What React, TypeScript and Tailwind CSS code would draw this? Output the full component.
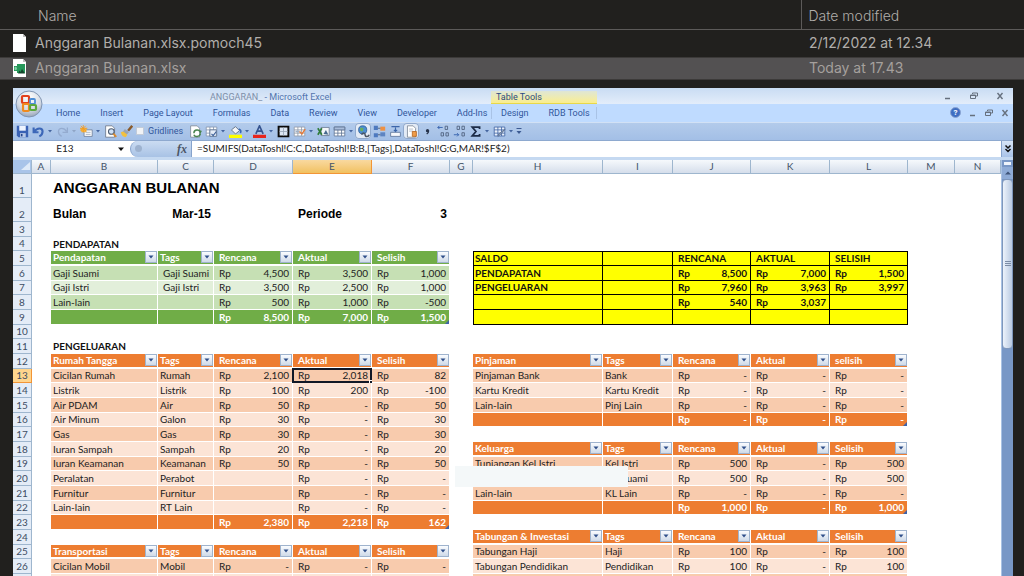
import type { ReactNode } from "react";

type Kind = "head" | "odd" | "even" | "total" | "saldo" | "label" | "title" | "period";
type Line = { kind: Kind; tone?: "green" | "orange"; indent?: boolean; cells: string[] };

const files = [
  { name: "Anggaran Bulanan.xlsx.pomoch45", date: "2/12/2022 at 12.34", excel: false },
  { name: "Anggaran Bulanan.xlsx", date: "Today at 17.43", excel: true },
];

const ribbonTabs = ["Home", "Insert", "Page Layout", "Formulas", "Data", "Review", "View", "Developer", "Add-Ins"];
const columns = ["A", "B", "C", "D", "E", "F", "G", "H", "I", "J", "K", "L", "M", "N"];

const leftLines: Record<number, Line> = {
  1: { kind: "title", cells: ["ANGGARAN BULANAN", "", "", "", ""] },
  2: { kind: "period", cells: ["Bulan", "Mar-15", "", "Periode", "3"] },
  4: { kind: "label", cells: ["PENDAPATAN", "", "", "", ""] },
  5: { kind: "head", tone: "green", cells: ["Pendapatan", "Tags", "Rencana", "Aktual", "Selisih"] },
  6: { kind: "odd", tone: "green", indent: true, cells: ["Gaji Suami", "Gaji Suami", "4,500", "3,500", "1,000"] },
  7: { kind: "even", tone: "green", indent: true, cells: ["Gaji Istri", "Gaji Istri", "3,500", "2,500", "1,000"] },
  8: { kind: "odd", tone: "green", cells: ["Lain-lain", "", "500", "1,000", "-500"] },
  9: { kind: "total", tone: "green", cells: ["", "", "8,500", "7,000", "1,500"] },
  11: { kind: "label", cells: ["PENGELUARAN", "", "", "", ""] },
  12: { kind: "head", tone: "orange", cells: ["Rumah Tangga", "Tags", "Rencana", "Aktual", "Selisih"] },
  13: { kind: "odd", tone: "orange", cells: ["Cicilan Rumah", "Rumah", "2,100", "2,018", "82"] },
  14: { kind: "even", tone: "orange", cells: ["Listrik", "Listrik", "100", "200", "-100"] },
  15: { kind: "odd", tone: "orange", cells: ["Air PDAM", "Air", "50", "-", "50"] },
  16: { kind: "even", tone: "orange", cells: ["Air Minum", "Galon", "30", "-", "30"] },
  17: { kind: "odd", tone: "orange", cells: ["Gas", "Gas", "30", "-", "30"] },
  18: { kind: "even", tone: "orange", cells: ["Iuran Sampah", "Sampah", "20", "-", "20"] },
  19: { kind: "odd", tone: "orange", cells: ["Iuran Keamanan", "Keamanan", "50", "-", "50"] },
  20: { kind: "even", tone: "orange", cells: ["Peralatan", "Perabot", "", "-", "-"] },
  21: { kind: "odd", tone: "orange", cells: ["Furnitur", "Furnitur", "", "-", "-"] },
  22: { kind: "even", tone: "orange", cells: ["Lain-lain", "RT Lain", "", "-", "-"] },
  23: { kind: "total", tone: "orange", cells: ["", "", "2,380", "2,218", "162"] },
  25: { kind: "head", tone: "orange", cells: ["Transportasi", "Tags", "Rencana", "Aktual", "Selisih"] },
  26: { kind: "odd", tone: "orange", cells: ["Cicilan Mobil", "Mobil", "-", "-", "-"] },
  27: { kind: "even", tone: "orange", cells: ["", "", "", "", ""] },
};

const rightLines: Record<number, Line> = {
  5: { kind: "saldo", cells: ["SALDO", "", "RENCANA", "AKTUAL", "SELISIH"] },
  6: { kind: "saldo", cells: ["PENDAPATAN", "", "8,500", "7,000", "1,500"] },
  7: { kind: "saldo", cells: ["PENGELUARAN", "", "7,960", "3,963", "3,997"] },
  8: { kind: "saldo", cells: ["", "", "540", "3,037", ""] },
  9: { kind: "saldo", cells: ["", "", "", "", ""] },
  12: { kind: "head", tone: "orange", cells: ["Pinjaman", "Tags", "Rencana", "Aktual", "selisih"] },
  13: { kind: "odd", tone: "orange", cells: ["Pinjaman Bank", "Bank", "-", "-", "-"] },
  14: { kind: "even", tone: "orange", cells: ["Kartu Kredit", "Kartu Kredit", "-", "-", "-"] },
  15: { kind: "odd", tone: "orange", cells: ["Lain-lain", "Pinj Lain", "-", "-", "-"] },
  16: { kind: "total", tone: "orange", cells: ["", "", "-", "-", "-"] },
  18: { kind: "head", tone: "orange", cells: ["Keluarga", "Tags", "Rencana", "Aktual", "Selisih"] },
  19: { kind: "odd", tone: "orange", cells: ["Tunjangan Kel Istri", "Kel Istri", "500", "-", "500"] },
  20: { kind: "even", tone: "orange", cells: ["", "Kel Suami", "500", "-", "500"] },
  21: { kind: "odd", tone: "orange", cells: ["Lain-lain", "KL Lain", "-", "-", "-"] },
  22: { kind: "total", tone: "orange", cells: ["", "", "1,000", "-", "1,000"] },
  24: { kind: "head", tone: "orange", cells: ["Tabungan & Investasi", "Tags", "Rencana", "Aktual", "Selisih"] },
  25: { kind: "odd", tone: "orange", cells: ["Tabungan Haji", "Haji", "100", "-", "100"] },
  26: { kind: "even", tone: "orange", cells: ["Tabungan Pendidikan", "Pendidikan", "100", "-", "100"] },
  27: { kind: "odd", tone: "orange", cells: ["", "", "", "", ""] },
};

const fills = {
  green: { head: "bg-[#70ad47]", odd: "bg-[#c6e0b4]", even: "bg-[#e2efda]", total: "bg-[#70ad47]" },
  orange: { head: "bg-[#ed7d31]", odd: "bg-[#f8cbad]", even: "bg-[#fce4d6]", total: "bg-[#ed7d31]" },
};

function FileIcon({ excel }: { excel: boolean }) {
  return (
    <svg className="h-[18px] w-[13px] shrink-0" viewBox="0 0 13 18">
      <path d="M0 0h10l3 3v15H0z" fill="#fff" />
      <path d="M10 0v3h3z" fill="#bdbdbd" />
      {excel && (
        <>
          <path d="M4 5h8v9H4v-2H1V7h3z" fill="#26985a" />
          <path d="M1.500 8.500c0-1 2.500-1 2.500 1s-2 2-2.500 1z" fill="#7fd0a3" />
          <path d="M5 14.500l1.500-3 1 1.500 1.500-3 3 4.500z" fill="#12472c" />
        </>
      )}
    </svg>
  );
}

function FileList() {
  return (
    <table className="w-full table-fixed border-collapse text-left font-['Inter',sans-serif] text-sm leading-5 text-[#b1aeab]">
      <colgroup>
        <col />
        <col className="w-[223px]" />
      </colgroup>
      <thead>
        <tr className="h-[29px] border-b border-[#5c5a59]">
          <th className="pt-1 pl-[38px] font-light">Name</th>
          <th className="border-l border-[#5c5a59] pt-1 pl-[7px] font-light">Date modified</th>
        </tr>
      </thead>
      <tbody>
        {files.map((file) => (
          <tr key={file.name} className={file.excel ? "h-[22px] border-y border-[#3c3a39] bg-[#535152] text-[#a5a09d]" : "h-7"}>
            <td className="p-0 pl-[13px]">
              <div className="flex items-center gap-[9px]">
                <FileIcon excel={file.excel} />
                {file.name}
              </div>
            </td>
            <td className="p-0 pl-2">{file.date}</td>
          </tr>
        ))}
      </tbody>
    </table>
  );
}

function OfficeOrb() {
  return (
    <svg className="h-7 w-7" viewBox="0 0 28 28">
      <defs>
        <radialGradient id="orb" cx="50%" cy="25%" r="80%">
          <stop offset="0" stopColor="#ffffff" />
          <stop offset="0.6" stopColor="#d3dae4" />
          <stop offset="1" stopColor="#8d9bb0" />
        </radialGradient>
      </defs>
      <circle cx="14" cy="14" r="13" fill="url(#orb)" stroke="#8195b2" />
      <g fill="none" strokeWidth="2.2" strokeLinejoin="round">
        <rect x="7" y="6" width="7" height="7" rx="1" stroke="#e2401c" />
        <rect x="15" y="9" width="5" height="5" rx="1" stroke="#4f8fd6" strokeWidth="1.8" />
        <rect x="8" y="14" width="6" height="7" rx="1" stroke="#f08a1d" />
        <rect x="15" y="15" width="6" height="5" rx="1" stroke="#5aa83b" />
      </g>
    </svg>
  );
}

function WindowButtons({ gap }: { gap: string }) {
  return (
    <div className={`flex items-center text-[#66707e] ${gap}`}>
      <button aria-label="Minimize">
        <svg className="h-2 w-2" viewBox="0 0 8 8"><path d="M1 6.5h5" stroke="currentColor" strokeWidth="1.5" /></svg>
      </button>
      <button aria-label="Restore">
        <svg className="h-2 w-2" viewBox="0 0 8 8" fill="none" stroke="currentColor"><path d="M2.5 2V1h5v3H6M.5 3h5v3.5h-5zM.5 3.500h5" /></svg>
      </button>
      <button aria-label="Close">
        <svg className="h-2 w-2" viewBox="0 0 8 8"><path d="M1.500 1l5 6m0-6l-5 6" stroke="currentColor" strokeWidth="1.4" /></svg>
      </button>
    </div>
  );
}

function Tool({ label, pressed, children }: { label: string; pressed?: boolean; children: ReactNode }) {
  return (
    <button
      aria-label={label}
      className={`flex h-4 w-4 shrink-0 items-center justify-center ${pressed ? "rounded-sm bg-[#e3ebf6] ring-1 ring-[#90a9cd] ring-inset" : ""}`}
    >
      <svg className="h-[13px] w-[13px]" viewBox="0 0 16 16" fill="none">
        {children}
      </svg>
    </button>
  );
}

function Caret({ dim }: { dim?: boolean }) {
  return (
    <svg className="h-2 w-2 shrink-0" viewBox="0 0 8 8">
      <path d="M2 3h4L4 5.500z" fill={dim ? "#8fa5c6" : "#4566a0"} />
    </svg>
  );
}

const gridPath = "M1.500 2.500h13v11h-13zM1.500 6h13M1.500 10h13M6 2.500v11M10.500 2.500v11";

function Toolbar() {
  return (
    <div className="flex h-[19px] items-center border-t border-[#d2e1f5] border-b border-b-[#8ea9cf] bg-linear-to-b from-[#b3cbeb] to-[#a3bfe6] pl-px">
      <Tool label="Save">
        <path d="M1 1h14v14H3l-2-2z" fill="#3a62b4" />
        <path d="M4 1h8v6H4z" fill="#eef4ff" />
        <path d="M5 10h7v5H5z" fill="#b9c9e6" />
        <path d="M6 11h2v3H6z" fill="#24458c" />
      </Tool>
      <Tool label="Undo">
        <path d="M2 3v6h6M3 8c3-5 10-5 10 0 0 3-2 5-4 6" stroke="#3c67b8" strokeWidth="2.600" />
      </Tool>
      <Caret />
      <Tool label="Redo">
        <path d="M14 3v6H8M13 8C10 3 3 3 3 8c0 3 2 5 4 6" stroke="#94abcf" strokeWidth="1.600" />
      </Tool>
      <Caret dim />
      <Tool label="New note">
        <path d="M5 6h10v8H5z" fill="#fdfdfd" stroke="#6b7c97" />
        <path d="M0 4h8v5H2z" fill="#f4b13c" />
        <path d="M4 0v9M0 4h9M1 1l6 6M7 1L1 7" stroke="#f39a1e" />
        <path d="M7 9h6M7 11.500h6" stroke="#9aa7bb" />
      </Tool>
      <Caret />
      <Tool label="Print preview">
        <path d="M2 1h8l3 3v11H2z" fill="#fff" stroke="#6a7587" />
        <circle cx="9" cy="8" r="3.500" fill="#cfe1f6" stroke="#4d5b70" strokeWidth="1.300" />
        <path d="M11.500 10.500l3.500 4" stroke="#d98a30" strokeWidth="2.400" />
      </Tool>
      <Tool label="Format painter">
        <path d="M15 1l-5 6" stroke="#8a5a2a" strokeWidth="3" />
        <path d="M6 5l5 4-3 3-5-3z" fill="#9aa4b3" />
        <path d="M1 9l3-1 5 4-2 3c-3 0-5-2-6-6z" fill="#f3c13e" />
      </Tool>
      <label className="flex w-[53px] shrink-0 items-center gap-1 pl-0.5">
        <input type="checkbox" className="h-2 w-2 shrink-0 appearance-none border border-[#c2cbd8] bg-[#f1f3f6]" />
        Gridlines
      </label>
      <Tool label="Refresh">
        <path d="M2 1h8l3 3v11H2z" fill="#fff" stroke="#7d8796" />
        <path d="M6 10c0-5 7-5 8-1l1-2m-1 4c-1 4-7 4-8 1" stroke="#4a8550" strokeWidth="1.800" />
      </Tool>
      <Tool label="Properties">
        <path d={gridPath} fill="#fff" stroke="#8193ac" />
        <path d="M6 6h8v8H6z" fill="#e7eef8" stroke="#5b7191" />
        <path d="M8 11l2 2 4-5" stroke="#3a5d96" strokeWidth="1.400" />
      </Tool>
      <Caret />
      <Tool label="Fill color">
        <path d="M3 6l5-4 5 5-5 4z" fill="#f3f5f8" stroke="#59677c" />
        <path d="M12 5c3 1 3 3 2 5" stroke="#3b6ab5" strokeWidth="2" />
        <path d="M0 12h16v4H0z" fill="#ffff00" />
      </Tool>
      <Caret />
      <Tool label="Font color">
        <path d="M3.500 11L8 1l4.500 10M5 7.500h6" stroke="#35538f" strokeWidth="2" />
        <path d="M0 12h16v4H0z" fill="#e8241c" />
      </Tool>
      <Caret />
      <Tool label="Borders">
        <path d="M2 2h12v12H2z" fill="#dce6f4" stroke="#0a0a0a" strokeWidth="2.400" />
        <path d="M8 3v10M3 8h10" stroke="#98a5b8" />
      </Tool>
      <Tool label="Conditional formatting">
        <path d={gridPath} fill="#fff" stroke="#8f98a6" />
        <path d="M3 7h5v2H3z" fill="#9fb0c6" />
        <path d="M8 8l3 3 4-6" stroke="#e57a3a" strokeWidth="1.800" />
      </Tool>
      <Caret />
      <Tool label="Export">
        <path d="M5 3h10v10H5z" fill="#f3f6fa" stroke="#6a7a92" />
        <path d="M1 4l5 8m0-8l-5 8" stroke="#2f7b38" strokeWidth="2" />
        <path d="M8 11l3-5 3 6z" fill="#47698f" />
      </Tool>
      <Tool label="Freeze panes">
        <path d={gridPath} fill="#fff" stroke="#5f7494" />
        <path d="M1.500 2.500h13V6h-13z" fill="#a9bddb" stroke="#5f7494" />
      </Tool>
      <Caret />
      <Tool label="Hyperlink" pressed>
        <circle cx="7" cy="6" r="5" fill="#4c8fd0" stroke="#2e5d96" />
        <path d="M4 3l4 1-1 4-3-1z" fill="#6bb05a" />
        <path d="M6 12c0-3 4-3 4 0s4 3 5 0" stroke="#4b5563" strokeWidth="1.800" />
      </Tool>
      <Tool label="Group">
        <path d="M1 1h5v5H1zM1 10h5v5H1z" fill="#4d79bf" />
        <path d="M9 2h6v5H9z" fill="#ee9042" />
        <path d="M9 9h6v5H9z" fill="#5d84c2" />
        <path d="M6 4h3M6 12h3" stroke="#49566a" />
      </Tool>
      <Tool label="Insert row">
        <path d="M2 9h12v5H2z" fill="#f5f8fc" stroke="#5a7298" />
        <path d="M3 2h10M8 3v4M6 6l2 2 2-2" stroke="#3c66aa" strokeWidth="1.400" />
      </Tool>
      <Tool label="Document" pressed>
        <path d="M3 1h7l3 3v11H3z" fill="#fff" stroke="#7b8695" />
        <path d="M5 5h5M5 7.500h5" stroke="#a7b1bf" />
        <path d="M9 8h5v6H9z" fill="#ee9c4a" stroke="#b8641b" />
      </Tool>
      <Tool label="Comma style">
        <circle cx="8" cy="7" r="2" fill="#26324a" />
        <path d="M9.500 7c0 2-1 3-2.500 4" stroke="#26324a" strokeWidth="1.500" />
      </Tool>
      <Tool label="Increase decimal">
        <path d="M7 3H1m2-2L1 3l2 2" stroke="#3b66b0" strokeWidth="1.200" />
        <path d="M10 1.500h3v4h-3zM5 9.500h3v4H5zM11 9.500h3v4h-3z" stroke="#4a5b78" />
      </Tool>
      <Tool label="Decrease decimal">
        <path d="M1 12h6m-2-2l2 2-2 2" stroke="#3b66b0" strokeWidth="1.200" />
        <path d="M5 1.500h3v4H5zM11 1.500h3v4h-3zM11 9.500h3v4h-3z" stroke="#4a5b78" />
      </Tool>
      <Tool label="Sum">
        <path d="M13 5V2.500H4L8.500 8 4 13.500h9V11" stroke="#1d2c48" strokeWidth="2.200" />
      </Tool>
      <Caret />
      <Tool label="Format as table">
        <path d={gridPath} fill="#e9f0fa" stroke="#3f63a3" />
        <path d="M15 5l-6 7-3 2 1-3z" fill="#8ba4c8" stroke="#5b6f8e" />
      </Tool>
      <Caret />
      <svg className="h-2 w-2 shrink-0" viewBox="0 0 8 8">
        <path d="M1.500 1.500h5" stroke="#3c5a92" />
        <path d="M1.500 4h5L4 7z" fill="#3c5a92" />
      </svg>
    </div>
  );
}

function Ribbon() {
  return (
    <header className="relative font-['Roboto',sans-serif] text-[9px] leading-3 text-[#31569b]">
      <div className="flex h-4 bg-linear-to-b from-[#c9dcf3] to-[#e3edfa]">
        <div className="w-[478px] shrink-0 pt-[3px] pl-[197px] text-[#5275ae]">
          <span className="text-[#7d8fa9]">ANGGARAN_</span> - Microsoft Excel
        </div>
        <div className="mt-[3px] w-[106px] shrink-0 border-b border-[#e8d84a] bg-linear-to-b from-[#dfe6d5] to-[#fbee8c] pl-[5px] text-[#2c4a82]">Table Tools</div>
        <div className="flex flex-1 justify-end pr-[9px]">
          <WindowButtons gap="gap-[18px]" />
        </div>
      </div>
      <nav className="flex h-[18px] items-center bg-[#bfdbff]">
        <div className="flex w-[478px] shrink-0 gap-5 pl-[43px] whitespace-nowrap">
          {ribbonTabs.map((tab) => (
            <button key={tab}>{tab}</button>
          ))}
        </div>
        <div className="flex w-[106px] shrink-0 gap-5 border-x border-[#a9c3e6] pl-[9px] whitespace-nowrap">
          <button>Design</button>
          <button>RDB Tools</button>
        </div>
        <div className="flex flex-1 items-center justify-end gap-2 pr-1">
          <button aria-label="Help" className="flex h-[11px] w-[11px] items-center justify-center rounded-full border border-[#8ba5d2] bg-[#3f6ec2] text-[8px] font-bold text-white">?</button>
          <WindowButtons gap="gap-2" />
        </div>
      </nav>
      <Toolbar />
      <button aria-label="Office menu" className="absolute top-[2px] left-[2px]">
        <OfficeOrb />
      </button>
    </header>
  );
}

function FormulaBar() {
  return (
    <div className="flex h-[19px] border-b-[3px] border-[#c5d9f1] bg-white font-['Lato',sans-serif] text-[#222]">
      <div className="flex w-[117px] shrink-0 items-center">
        <input aria-label="Name box" defaultValue="E13" className="w-[104px] bg-transparent text-center text-[10px] outline-none" />
        <svg className="h-2 w-2" viewBox="0 0 8 8"><path d="M1 2.500h6L4 6z" fill="#111" /></svg>
      </div>
      <div className="flex w-[62px] shrink-0 items-center justify-between rounded-l-full border-r border-l border-[#86a3cc] bg-linear-to-b from-[#cbdcf2] to-[#a8c2e5] pr-1 pl-1">
        <span className="h-[7px] w-[7px] rounded-full bg-[#9db2cf]" />
        <button aria-label="Insert function" className="font-['Liberation_Serif',serif] text-xs leading-3 font-bold text-[#4b5565] italic">fx</button>
      </div>
      <input
        aria-label="Formula"
        defaultValue="=SUMIFS(DataToshl!C:C,DataToshl!B:B,[Tags],DataToshl!G:G,MAR!$F$2)"
        className="min-w-0 flex-1 pl-[5px] text-[10px] outline-none"
      />
      <button aria-label="Expand formula bar" className="flex w-3 items-center justify-center border-l border-[#86a3cc] bg-linear-to-b from-[#d7e5f7] to-[#a9c3e8]">
        <svg className="h-2 w-2" viewBox="0 0 8 8"><path d="M1.500 0.500L4 3l2.500-2.500M1.500 4L4 6.500 6.500 4" fill="none" stroke="#111" strokeWidth="1.500" /></svg>
      </button>
    </div>
  );
}

function FilterButton({ label }: { label: string }) {
  return (
    <button aria-label={`Filter ${label}`} className="flex h-3 w-3 shrink-0 items-center justify-center border border-[#9fb3cd] bg-linear-to-b from-[#fafcff] to-[#cfdae8]">
      <svg className="h-2 w-2" viewBox="0 0 8 8"><path d="M1.500 2.500h5L4 5.500z" fill="#2f4f8a" /></svg>
    </button>
  );
}

function Amount({ value }: { value: string }) {
  return (
    <div className="flex justify-between">
      <span>Rp</span>
      <span>{value}</span>
    </div>
  );
}

function isAmount(value: string) {
  return /^-?[\d,]*$/.test(value) && value !== "";
}

function Cells({ line, active, first }: { line?: Line; active?: boolean; first?: boolean }) {
  if (!line) return <td colSpan={5} className="p-0" />;
  const { kind, tone, cells } = line;

  if (kind === "title") {
    return <td colSpan={5} className="p-0 pl-[2px] pb-[2px] align-bottom font-['Liberation_Sans',sans-serif] text-[15px] leading-4 font-bold text-black">{cells[0]}</td>;
  }
  if (kind === "label") {
    return <td colSpan={5} className="p-0 pl-[2px] font-bold text-[#111]">{cells[0]}</td>;
  }
  if (kind === "period") {
    return cells.map((cell, i) => (
      <td
        key={i}
        className={`p-0 pb-px align-bottom font-['Liberation_Sans',sans-serif] text-xs leading-[14px] font-bold text-black ${i === 3 ? "pl-[5px]" : i === 0 ? "pl-[2px]" : "pr-[3px] text-right"}`}
      >
        {cell}
      </td>
    ));
  }
  if (kind === "saldo") {
    return cells.map((cell, i) => (
      <td
        key={i}
        className={`border-r border-b border-black bg-[#ffff00] p-0 font-bold text-[#111] ${first ? "border-t" : ""} ${i === 0 ? "border-l" : ""} ${i < 2 ? "pl-px" : "pr-[3px] pl-[5px]"}`}
      >
        {isAmount(cell) ? <Amount value={cell} /> : cell}
      </td>
    ));
  }

  const strong = kind === "head" || kind === "total";
  return cells.map((cell, i) => {
    const pad = i > 1 || (line.indent && i === 1) ? "pl-[5px]" : "pl-[2px]";
    const edge = kind === "head" ? "border-b-2" : "border-b";
    const base = `relative border-r border-white p-0 ${edge} ${pad} ${fills[tone ?? "orange"][kind]} ${strong ? "font-bold text-white" : "text-[#222]"}`;
    if (kind === "head") {
      return (
        <th key={i} className={`${base} text-left`}>
          <div className="flex items-center justify-between">
            {cell}
            <FilterButton label={cell} />
          </div>
        </th>
      );
    }
    return (
      <td key={i} className={`${base} ${i > 1 ? "pr-[3px]" : ""}`}>
        {i > 1 && cell ? <Amount value={cell} /> : cell}
        {active && i === 3 && (
          <span className="absolute -inset-px border-2 border-[#111827]">
            <span className="absolute -right-[3px] -bottom-[3px] h-1 w-1 border-t border-l border-white bg-[#111827]" />
          </span>
        )}
        {kind === "total" && i === 4 && (
          <svg className="absolute right-0 bottom-0 h-1 w-1" viewBox="0 0 4 4"><path d="M4 0v4H0z" fill="#3f63a8" /></svg>
        )}
      </td>
    );
  });
}

// 11pt rows land between 14 and 15 px, so every third one is a pixel shorter
function rowHeight(row: number) {
  if (row < 3) return "h-6";
  return row % 3 === 1 ? "h-[14px]" : "h-[15px]";
}

function Sheet() {
  const rows = Array.from({ length: 27 }, (_, i) => i + 1);
  return (
    <div className="relative flex items-stretch bg-white">
      <table className="min-w-0 flex-1 table-fixed border-separate border-spacing-0 font-['Lato',sans-serif] text-[10px] leading-3 whitespace-nowrap">
        <colgroup>
          <col className="w-[19px]" />
          <col className="w-[19px]" />
          <col className="w-[107px]" />
          <col className="w-[56px]" />
          <col className="w-[79px]" />
          <col className="w-[79px]" />
          <col className="w-[78px]" />
          <col className="w-[23px]" />
          <col className="w-[130px]" />
          <col className="w-[70px]" />
          <col className="w-[78px]" />
          <col className="w-[79px]" />
          <col className="w-[78px]" />
          <col className="w-[47px]" />
          <col />
        </colgroup>
        <thead>
          <tr className="h-[14px] text-[#44546a]">
            <th className="border-r border-b border-[#9eb6ce] bg-[#a9c4e9] p-0">
              <svg className="ml-auto h-[9px] w-[10px]" viewBox="0 0 10 9"><path d="M9 0v8H0z" fill="#dfeaf8" /></svg>
            </th>
            {columns.map((name) => (
              <th
                key={name}
                className={`border-r border-b p-0 font-normal ${name === "E" ? "border-[#f29536] bg-linear-to-b from-[#f9d99f] to-[#f1c15f]" : "border-[#9eb6ce] bg-linear-to-b from-[#f6f9fc] to-[#d5deeb]"}`}
              >
                {name}
              </th>
            ))}
          </tr>
        </thead>
        <tbody>
          {rows.map((row) => (
            <tr key={row} className={rowHeight(row)}>
              <th
                className={`border-r border-b p-0 font-normal text-[#3d4d63] ${row === 13 ? "border-[#f29536] bg-[#ffd58d]" : "border-[#9eb6ce] bg-[#e4ecf7]"} ${row < 3 ? "pb-px align-bottom" : ""}`}
              >
                {row < rows.length && row}
              </th>
              <td className="p-0" />
              <Cells line={leftLines[row]} active={row === 13} />
              <td className="p-0" />
              <Cells line={rightLines[row]} first={row === 5} />
              <td className="p-0" />
              <td className="p-0" />
            </tr>
          ))}
        </tbody>
      </table>

      <div className="flex w-3 shrink-0 flex-col border-l border-[#a9c2e4] bg-[#7897c6]">
        <div className="h-[7px] border-2 border-[#7897c6] bg-[#eef4fc]" />
        <button aria-label="Scroll up" className="flex h-3 items-center justify-center bg-[#8eabd6]">
          <svg className="h-2 w-2" viewBox="0 0 8 8"><path d="M1 5.500h6L4 2.500z" fill="#3e5478" /></svg>
        </button>
        <div className="flex h-[170px] flex-col items-center justify-center gap-px rounded-sm border border-[#7f97bb] bg-linear-to-r from-[#edf3fb] to-[#b9cae2]">
          <span className="h-px w-1.5 bg-[#7c8ca5]" />
          <span className="h-px w-1.5 bg-[#7c8ca5]" />
          <span className="h-px w-1.5 bg-[#7c8ca5]" />
        </div>
      </div>

      {/* blank strip over the family rows */}
      <div className="absolute top-[306px] left-[442px] h-[21px] w-[173px] bg-[#f4f8f9]" />
    </div>
  );
}

export default function App() {
  return (
    <div className="h-screen overflow-hidden bg-[#21201e]">
      <FileList />
      <main className="mt-2 mr-[11px] ml-[13px]">
        <Ribbon />
        <FormulaBar />
        <Sheet />
      </main>
    </div>
  );
}
